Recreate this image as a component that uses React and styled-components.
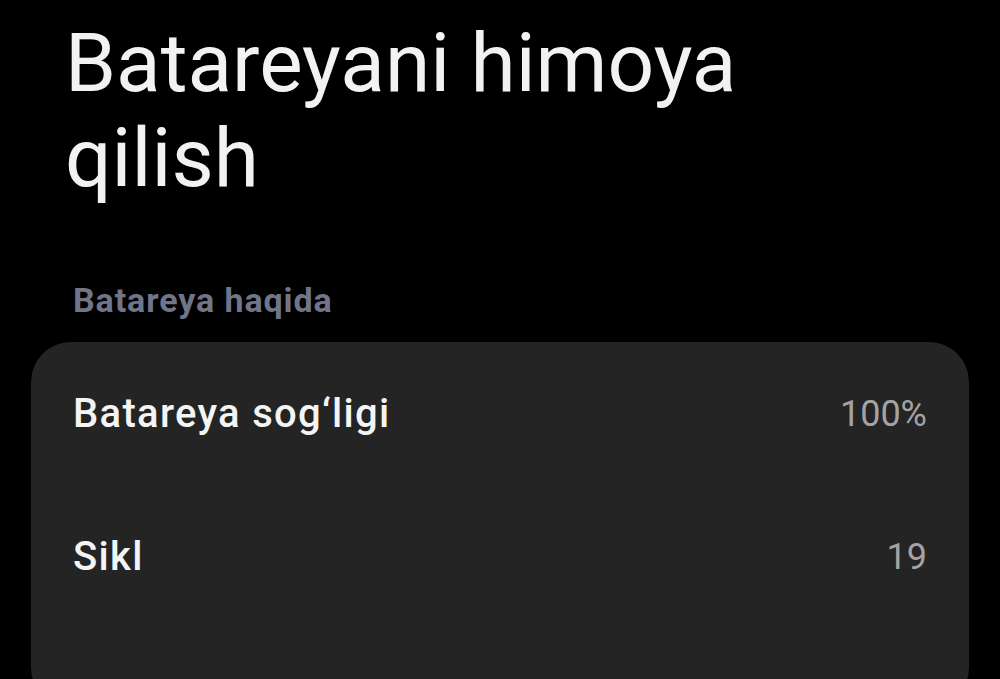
import React from 'react';
import styled, { createGlobalStyle } from 'styled-components';

const GlobalStyle = createGlobalStyle`
html, body {
  margin: 0;
  padding: 0;
  background: #000;
  overflow: hidden;
}
body {
  font-family: Roboto, "Noto Sans", sans-serif;
  -webkit-font-smoothing: antialiased;
}
`;

const Page = styled.div`
min-height: 679px;
background: #000;
padding: 16px 31px 0 31px;
box-sizing: border-box;
`;

const Title = styled.h1`
margin: 0 0 74px 34px;
font-size: 82px;
line-height: 95px;
font-weight: 400;
color: #f2f2f2;
letter-spacing: 0;
`;

const SectionLabel = styled.div`
margin: 0 0 22px 42px;
font-size: 34px;
line-height: 40px;
font-weight: 700;
letter-spacing: 0.9px;
color: #71758a;
`;

const Card = styled.div`
background: #242424;
border-radius: 40px;
padding: 0 42px 80px;
`;

const Row = styled.div`
display: flex;
align-items: center;
justify-content: space-between;
height: ${({ $h }) => $h || 142}px;
`;

const Label = styled.span`
font-size: 40px;
line-height: 46px;
font-weight: 500;
letter-spacing: 1.3px;
color: #f4f4f4;
`;

const Value = styled.span`
font-size: 36px;
line-height: 42px;
font-weight: 400;
color: #a3a3a3;
`;

const rows = [
  { label: 'Batareya sog‘ligi', value: '100%', h: 144 },
  { label: 'Sikl', value: '19', h: 142 },
];

export default function App() {
  return (
    <>
      <GlobalStyle />
      <Page>
        <Title>
          Batareyani himoya
          <br />
          qilish
        </Title>
        <SectionLabel>Batareya haqida</SectionLabel>
        <Card>
          {rows.map((r) => (
            <Row key={r.label} $h={r.h}>
              <Label>{r.label}</Label>
              <Value>{r.value}</Value>
            </Row>
          ))}
        </Card>
      </Page>
    </>
  );
}
